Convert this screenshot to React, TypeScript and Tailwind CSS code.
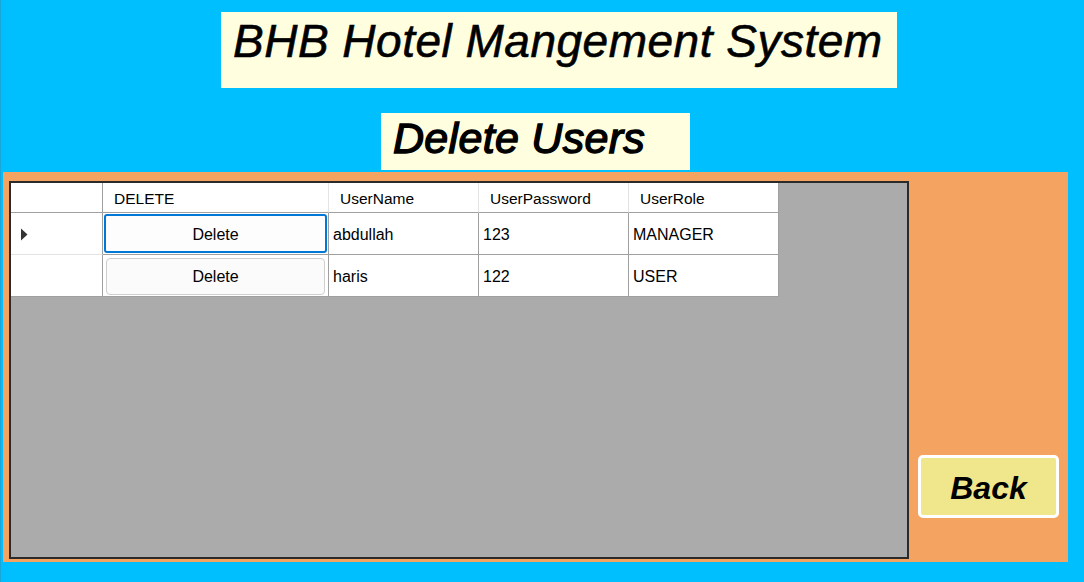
import React from 'react';

type User = { name: string; password: string; role: string };

const users: User[] = [
  { name: 'abdullah', password: '123', role: 'MANAGER' },
  { name: 'haris', password: '122', role: 'USER' },
];

const font = "font-['Liberation_Sans',Arial,sans-serif]";

function HeaderCell({ label, last }: { label: string; last?: boolean }) {
  return (
    <div
      className={`flex items-center h-[30px] pl-[11px] pt-[3px] text-[15.5px] bg-white border-b border-b-[#a0a0a0] ${
        last ? 'border-r border-r-[#a0a0a0]' : 'border-r border-r-[#e3e3e3]'
      }`}
    >
      {label}
    </div>
  );
}

function DataCell({ children }: { children: React.ReactNode }) {
  return (
    <div className="flex items-center h-[42px] pl-[4px] pt-[3px] bg-white border-r border-b border-[#a0a0a0]">
      {children}
    </div>
  );
}

export default function App() {
  return (
    <div className={`w-[1084px] h-[582px] bg-[#00bfff] border-l border-l-[#1aa6d9] flex flex-col overflow-hidden ${font}`}>
      {/* Title */}
      <div className="ml-[220px] mt-[12px] w-[676px] h-[76px] bg-[#ffffe0] pl-[12px] pt-[6px]">
        <span className="italic text-[46px] leading-[46px] tracking-[0.5px] text-black [-webkit-text-stroke:0.6px_black]">
          BHB Hotel Mangement System
        </span>
      </div>

      {/* Sub title */}
      <div className="ml-[380px] mt-[25px] w-[309px] h-[57px] bg-[#ffffe0] pl-[12px] pt-[4px]">
        <span className="italic text-[43px] leading-[43px] tracking-[0.3px] text-black [-webkit-text-stroke:1.4px_black]">
          Delete Users
        </span>
      </div>

      {/* Orange panel */}
      <div className="ml-[2px] mt-[2px] w-[1065px] h-[390px] bg-[#f4a460] flex">
        {/* Data grid */}
        <div className="ml-[6px] mt-[9px] w-[900px] h-[378px] bg-[#ababab] border-2 border-[#2a2a2a] text-[16px] text-black">
          <div className="grid grid-cols-[92px_226px_150px_150px_150px] w-[768px]">
            <div className="h-[30px] bg-white border-r border-r-[#a0a0a0] border-b border-b-[#a0a0a0]" />
            <HeaderCell label="DELETE" />
            <HeaderCell label="UserName" />
            <HeaderCell label="UserPassword" />
            <HeaderCell label="UserRole" last />

            {users.map((u, i) => (
              <React.Fragment key={u.name}>
                <div
                  className={`flex items-center h-[42px] pl-[9px] pt-[2px] bg-white border-r border-r-[#a0a0a0] border-b ${
                    i === 0 ? 'border-b-[#e3e3e3]' : 'border-b-[#a0a0a0]'
                  }`}
                >
                  {i === 0 && (
                    <svg width="8" height="13" viewBox="0 0 8 13">
                      <path d="M1 0.5 L7.5 6.5 L1 12.5 Z" fill="#333" />
                    </svg>
                  )}
                </div>
                <div className="h-[42px] bg-white border-r border-b border-[#a0a0a0] p-[1px]">
                  {i === 0 ? (
                    <button className="w-full h-full rounded-[3px] border-2 border-[#0078d7] bg-[#fdfdfd] text-[16px] pt-[2px]">
                      Delete
                    </button>
                  ) : (
                    <button className="rounded-[4px] border border-[#cfcfcf] bg-[#fbfbfb] text-[16px] mt-[2px] ml-[2px] w-[219px] h-[37px] pt-[1px]">
                      Delete
                    </button>
                  )}
                </div>
                <DataCell>{u.name}</DataCell>
                <DataCell>{u.password}</DataCell>
                <DataCell>{u.role}</DataCell>
              </React.Fragment>
            ))}
          </div>
        </div>

        {/* Back button */}
        <div className="ml-[9px] mt-[283px]">
          <button className="w-[141px] h-[63px] rounded-[5px] border-[3px] border-white bg-[#f0e68c] italic font-bold text-[32px] text-black pt-[2px]">
            Back
          </button>
        </div>
      </div>
    </div>
  );
}
